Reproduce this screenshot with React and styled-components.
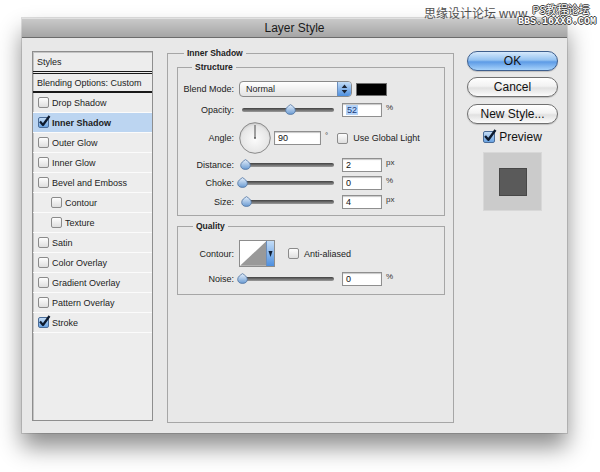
import React from 'react';
import styled, { createGlobalStyle } from 'styled-components';

const GlobalStyle = createGlobalStyle`
  html, body {
    margin: 0;
    padding: 0;
    background: #ffffff;
  }
  body {
    font-family: "Liberation Sans", Arial, sans-serif;
    color: #1e1e1e;
  }
`;

const Page = styled.div`
  position: relative;
  width: 600px;
  height: 472px;
  overflow: hidden;
  box-sizing: border-box;
  padding: 18px 0 0 22px;
`;

const Watermark = styled.div`
  position: absolute;
  top: 3px;
  left: 424px;
  width: 176px;
  height: 28px;
`;

const WmText = styled.div`
  font-family: "Noto Sans CJK SC", sans-serif;
  font-size: 12px;
  line-height: 14px;
  color: #505050;
  margin-top: 3px;
  white-space: nowrap;
`;

const WmLogo = styled.div`
  position: absolute;
  top: -1px;
  left: 93px;
  width: 80px;
  display: flex;
  flex-direction: column;
  align-items: center;
  color: #ffffff;
  text-shadow: 1px 0 #3a3a3a, -1px 0 #3a3a3a, 0 1px #3a3a3a, 0 -1px #3a3a3a;
  white-space: nowrap;
`;

const WmTop = styled.div`
  font-family: "Noto Sans CJK SC", sans-serif;
  font-size: 11px;
  line-height: 14px;
  padding-left: 8px;
`;

const WmBottom = styled.div`
  font-family: "Liberation Mono", monospace;
  font-weight: bold;
  font-size: 10px;
  line-height: 11px;
`;

const Window = styled.div`
  width: 545px;
  height: 415px;
  display: flex;
  flex-direction: column;
  background: #e8e8e8;
  box-shadow: 0 14px 22px rgba(0, 0, 0, 0.45), 0 0 0 1px rgba(0, 0, 0, 0.12);
`;

const TitleBar = styled.div`
  height: 20px;
  box-sizing: border-box;
  border-bottom: 1px solid #6c6c6c;
  background: linear-gradient(#cbcbcb, #a5a5a5);
  box-shadow: inset 0 1px 0 #e0e0e0;
  display: flex;
  align-items: center;
  justify-content: center;
  font-size: 12px;
  color: #1a1a1a;
`;

const Body = styled.div`
  flex: 1;
  display: flex;
  padding: 13px 9px 10px 10px;
`;

/* left list */

const StyleList = styled.div`
  width: 121px;
  box-sizing: border-box;
  margin-bottom: 2px;
  border: 1px solid #8e8e8e;
  box-shadow: inset 1px 1px 0 #c4c4c4;
  background: #ededed;
  display: flex;
  flex-direction: column;
  font-size: 9px;
  color: #222;
`;

const ListHeader = styled.div`
  height: ${p => p.$h}px;
  display: flex;
  align-items: center;
  padding-left: 4px;
  border-bottom: ${p => p.$line};
`;

const ListItem = styled.div`
  height: 19px;
  display: flex;
  align-items: center;
  padding-left: ${p => (p.$indent ? 18 : 5)}px;
  border-bottom: 1px solid #fbfbfb;
  background: ${p => (p.$selected ? '#bcd5f1' : 'transparent')};
  font-weight: ${p => (p.$selected ? 'bold' : 'normal')};
`;

const ItemText = styled.span`
  margin-left: 3px;
`;

/* checkbox */

const Box = styled.span`
  width: ${p => p.$size}px;
  height: ${p => p.$size}px;
  box-sizing: border-box;
  flex-shrink: 0;
  border: 1px solid ${p => (p.$checked ? '#4a6c98' : '#8b8b8b')};
  border-radius: 2px;
  background: ${p =>
    p.$checked
      ? 'linear-gradient(#c3dcf6, #6aa3e2)'
      : 'linear-gradient(#fdfdfd, #dedede)'};
  display: inline-flex;
  align-items: center;
  justify-content: center;
  margin-left: ${p => p.$ml || 0}px;

  svg {
    overflow: visible;
    margin: -3px 0 0 2px;
  }
`;

const Checkbox = ({ checked, size = 11, ml }) => (
  <Box $checked={checked} $size={size} $ml={ml}>
    {checked && (
      <svg width={size} height={size} viewBox="0 0 11 11">
        <path d="M1 5.5 L4 9 L10.5 0" fill="none" stroke="#0d1a2e" strokeWidth="2.2" strokeLinejoin="round" />
      </svg>
    )}
  </Box>
);

/* middle panel */

const OuterGroup = styled.div`
  width: 287px;
  box-sizing: border-box;
  margin: 2px 0 0 14px;
  border: 1px solid #a6a6a6;
  padding: 0 8px 0 9px;
`;

const InnerGroup = styled.div`
  border: 1px solid #a6a6a6;
  margin-top: ${p => p.$mt}px;
  padding-bottom: ${p => p.$pb}px;
`;

const Legend = styled.div`
  display: table;
  margin: -7px 0 0 ${p => p.$ml}px;
  padding: 0 3px;
  background: #e8e8e8;
  font-weight: bold;
  font-size: 8.5px;
  line-height: 12px;
  color: #222;
`;

const Row = styled.div`
  display: flex;
  align-items: center;
  height: ${p => p.$h || 18}px;
  margin-top: ${p => p.$mt || 0}px;
`;

const Label = styled.span`
  width: 56px;
  flex-shrink: 0;
  text-align: right;
  font-size: 9px;
  color: #222;
`;

const Select = styled.div`
  width: 113px;
  height: 16px;
  box-sizing: border-box;
  margin-left: 5px;
  display: flex;
  border: 1px solid #8a8a8a;
  border-radius: 4px;
  background: linear-gradient(#ffffff, #e3e3e3);
  overflow: hidden;
`;

const SelectText = styled.span`
  flex: 1;
  font-size: 9px;
  line-height: 14px;
  padding-left: 6px;
`;

const SelectArrows = styled.span`
  width: 13px;
  border-left: 1px solid #6b8ebd;
  background: linear-gradient(#c4ddf7, #4d8fdf);
  display: flex;
  align-items: center;
  justify-content: center;
`;

const Swatch = styled.div`
  width: 31px;
  height: 13px;
  box-sizing: border-box;
  margin-left: 4px;
  background: #000;
  border: 1px solid #6f6f6f;
`;

const SliderWrap = styled.div`
  position: relative;
  width: ${p => p.$w}px;
  height: 14px;
  margin-left: ${p => p.$ml}px;
  display: flex;
  align-items: center;
`;

const Track = styled.div`
  width: 100%;
  height: 4px;
  border-radius: 2px;
  background: linear-gradient(#404040, #9c9c9c);
`;

const Thumb = styled.svg`
  position: absolute;
  top: 1px;
  margin-left: -5px;
`;

const Slider = ({ value, w = 92, ml = 8 }) => (
  <SliderWrap $w={w} $ml={ml}>
    <Track />
    <Thumb width="11" height="11" viewBox="0 0 11 11" style={{ left: `${value}%` }}>
      <defs>
        <linearGradient id="thumbGrad" x1="0" y1="0" x2="0" y2="1">
          <stop offset="0" stopColor="#e6f0fb" />
          <stop offset="1" stopColor="#6a9bd3" />
        </linearGradient>
      </defs>
      <path
        d="M5.5 0.6 C7.8 2.2 10.3 3.6 10.3 6.4 C10.3 9 8.3 10.4 5.5 10.4 C2.7 10.4 0.7 9 0.7 6.4 C0.7 3.6 3.2 2.2 5.5 0.6 Z"
        fill="url(#thumbGrad)"
        stroke="#4f72a0"
        strokeWidth="0.8"
      />
    </Thumb>
  </SliderWrap>
);

const Field = styled.div`
  width: ${p => p.$w || 40}px;
  height: 14px;
  box-sizing: border-box;
  margin-left: ${p => p.$ml ?? 8}px;
  border: 1px solid #8f8f8f;
  box-shadow: inset 0 1px 1px rgba(0, 0, 0, 0.22);
  background: #fff;
  font-size: 9px;
  line-height: 12px;
  padding-left: 3px;
  color: #111;
`;

const Selected = styled.span`
  background: #b4d3f8;
  color: #1a3a7a;
  padding: 0 1px;
`;

const Unit = styled.span`
  font-size: 8px;
  color: #333;
  margin-left: 4px;
  margin-top: -6px;
`;

const CheckText = styled.span`
  font-size: 9px;
  color: #222;
  margin-left: 5px;
`;

const Dial = () => (
  <svg width="32" height="32" viewBox="0 0 32 32" style={{ marginLeft: 5, flexShrink: 0 }}>
    <defs>
      <radialGradient id="dialGrad" cx="0.5" cy="0.55" r="0.55">
        <stop offset="0" stopColor="#fbfbfb" />
        <stop offset="0.8" stopColor="#e6e6e6" />
        <stop offset="1" stopColor="#c9c9c9" />
      </radialGradient>
    </defs>
    <circle cx="16" cy="16" r="15.3" fill="url(#dialGrad)" stroke="#8a8a8a" strokeWidth="1" />
    <line x1="16" y1="16" x2="16" y2="3" stroke="#4a4a4a" strokeWidth="1" />
    <circle cx="16" cy="16" r="0.9" fill="#555" />
  </svg>
);

const ContourBox = styled.div`
  width: 36px;
  height: 27px;
  box-sizing: border-box;
  margin-left: 5px;
  display: flex;
  border: 1px solid #8c8c8c;
  background: #fff;
`;

const ContourDrop = styled.span`
  width: 7px;
  border-left: 1px solid #6b8ebd;
  background: linear-gradient(#c4ddf7, #4d8fdf);
  display: flex;
  align-items: center;
  justify-content: center;
`;

/* right column */

const Side = styled.div`
  width: 91px;
  margin-left: 13px;
  display: flex;
  flex-direction: column;
  align-items: center;
`;

const Button = styled.button`
  width: 91px;
  height: 20px;
  box-sizing: border-box;
  margin-top: ${p => p.$mt || 0}px;
  padding: 0;
  border-radius: 10px;
  border: 1px solid ${p => (p.$primary ? '#3e5f8e' : '#707070')};
  background: ${p =>
    p.$primary
      ? 'linear-gradient(#d6e9fc 0%, #94c2f1 45%, #5d9be6 55%, #a7d2fa 100%)'
      : 'linear-gradient(#ffffff 0%, #f2f2f2 45%, #e1e1e1 55%, #fbfbfb 100%)'};
  box-shadow: 0 1px 1px rgba(0, 0, 0, 0.18);
  font-family: "Liberation Sans", Arial, sans-serif;
  font-size: 12px;
  color: #111;
`;

const PreviewToggle = styled.div`
  display: flex;
  align-items: center;
  margin-top: 6px;
  font-size: 12px;
  color: #111;
`;

const PreviewText = styled.span`
  margin-left: 4px;
`;

const PreviewBox = styled.div`
  width: 59px;
  height: 59px;
  box-sizing: border-box;
  margin-top: 8px;
  background: #cbcbcb;
  border: 1px solid #d8d8d8;
  display: flex;
  align-items: center;
  justify-content: center;
`;

const PreviewSquare = styled.div`
  width: 28px;
  height: 28px;
  box-sizing: border-box;
  background: #5a5a5a;
  border: 1px solid #474747;
`;

const styles = [
  { name: 'Drop Shadow' },
  { name: 'Inner Shadow', checked: true, selected: true },
  { name: 'Outer Glow' },
  { name: 'Inner Glow' },
  { name: 'Bevel and Emboss' },
  { name: 'Contour', indent: true },
  { name: 'Texture', indent: true },
  { name: 'Satin' },
  { name: 'Color Overlay' },
  { name: 'Gradient Overlay' },
  { name: 'Pattern Overlay' },
  { name: 'Stroke', checked: true },
];

const sliders = [
  { label: 'Distance:', value: 2, thumb: 3, unit: 'px', mt: 1 },
  { label: 'Choke:', value: 0, thumb: 0, unit: '%', mt: 0 },
  { label: 'Size:', value: 4, thumb: 4, unit: 'px', mt: 1 },
];

export default function App() {
  return (
    <Page>
      <GlobalStyle />
      <Window>
        <TitleBar>Layer Style</TitleBar>
        <Body>
          <StyleList>
            <ListHeader $h={19} $line="3px double #1a1a1a">Styles</ListHeader>
            <ListHeader $h={17} $line="2px solid #1a1a1a">Blending Options: Custom</ListHeader>
            {styles.map(s => (
              <ListItem key={s.name} $selected={s.selected} $indent={s.indent}>
                <Checkbox checked={s.checked} />
                <ItemText>{s.name}</ItemText>
              </ListItem>
            ))}
          </StyleList>

          <OuterGroup>
            <Legend $ml={7}>Inner Shadow</Legend>
            <InnerGroup $mt={8} $pb={4}>
              <Legend $ml={14}>Structure</Legend>
              <Row $mt={7}>
                <Label>Blend Mode:</Label>
                <Select>
                  <SelectText>Normal</SelectText>
                  <SelectArrows>
                    <svg width="7" height="10" viewBox="0 0 7 10">
                      <path d="M3.5 0.5 L6.3 4 H0.7 Z M3.5 9.5 L6.3 6 H0.7 Z" fill="#1b2535" />
                    </svg>
                  </SelectArrows>
                </Select>
                <Swatch />
              </Row>
              <Row $mt={3}>
                <Label>Opacity:</Label>
                <Slider value={52} />
                <Field><Selected>52</Selected></Field>
                <Unit>%</Unit>
              </Row>
              <Row $h={34} $mt={2}>
                <Label>Angle:</Label>
                <Dial />
                <Field $w={47} $ml={3}>90</Field>
                <Unit>°</Unit>
                <Checkbox ml={9} />
                <CheckText>Use Global Light</CheckText>
              </Row>
              {sliders.map(s => (
                <Row key={s.label} $mt={s.mt}>
                  <Label>{s.label}</Label>
                  <Slider value={s.thumb} />
                  <Field>{s.value}</Field>
                  <Unit>{s.unit}</Unit>
                </Row>
              ))}
            </InnerGroup>

            <InnerGroup $mt={10} $pb={6}>
              <Legend $ml={15}>Quality</Legend>
              <Row $h={27} $mt={8}>
                <Label>Contour:</Label>
                <ContourBox>
                  <svg width="27" height="25" viewBox="0 0 27 25">
                    <polygon points="0,25 27,0 27,25" fill="#999999" />
                  </svg>
                  <ContourDrop>
                    <svg width="5" height="8" viewBox="0 0 5 8">
                      <path d="M0.5 1 H4.5 L2.5 7 Z" fill="#0f1d33" />
                    </svg>
                  </ContourDrop>
                </ContourBox>
                <Checkbox ml={13} />
                <CheckText>Anti-aliased</CheckText>
              </Row>
              <Row $mt={3}>
                <Label>Noise:</Label>
                <Slider value={2} w={94} ml={6} />
                <Field>0</Field>
                <Unit>%</Unit>
              </Row>
            </InnerGroup>
          </OuterGroup>

          <Side>
            <Button $primary>OK</Button>
            <Button $mt={6}>Cancel</Button>
            <Button $mt={7}>New Style...</Button>
            <PreviewToggle>
              <Checkbox checked size={12} />
              <PreviewText>Preview</PreviewText>
            </PreviewToggle>
            <PreviewBox>
              <PreviewSquare />
            </PreviewBox>
          </Side>
        </Body>
      </Window>

      <Watermark>
        <WmText>思缘设计论坛 www.</WmText>
        <WmLogo>
          <WmTop>PS教程论坛</WmTop>
          <WmBottom>BBS.16XX8.COM</WmBottom>
        </WmLogo>
      </Watermark>
    </Page>
  );
}
